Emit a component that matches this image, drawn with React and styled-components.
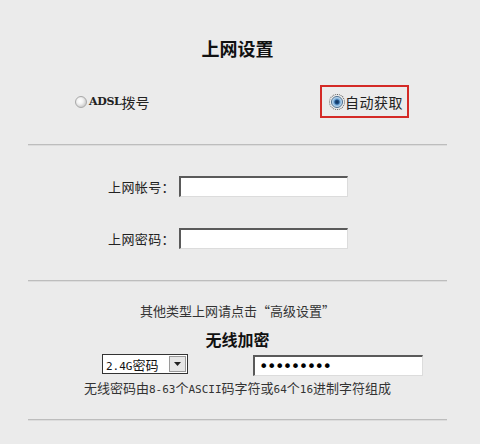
import React from "react";
import styled, { createGlobalStyle } from "styled-components";

const Global = createGlobalStyle`
  html, body { margin: 0; padding: 0; background: #ebebeb; }
  body { font-family: "Noto Sans CJK SC", "Noto Sans", sans-serif; color: #222; }
`;

const Page = styled.div`
  width: 480px;
  height: 444px;
  background: #ebebeb;
  overflow: hidden;
`;

const Panel = styled.div`
  margin-left: 28px;
  width: 419px;
  display: flex;
  flex-direction: column;
`;

const Title = styled.div`
  margin-top: ${(p) => p.$top}px;
  height: ${(p) => p.$h}px;
  line-height: ${(p) => p.$h}px;
  font-size: ${(p) => p.$size}px;
  font-weight: 700;
  text-align: center;
  color: #111;
`;

const RadioRow = styled.div`
  margin-top: 25px;
  height: 33px;
  display: flex;
  align-items: center;
  padding-left: 47px;
  padding-right: 38px;
`;

const Option = styled.label`
  display: flex;
  align-items: center;
  font-size: 14px;
  color: #222;
  ${(p) =>
    p.$boxed &&
    `
    margin-left: auto;
    box-sizing: border-box;
    width: 89px;
    height: 33px;
    border: 2px solid #d42a26;
    padding: 0 0 0 9px;
    letter-spacing: 0.5px;
  `}
`;

const Latin = styled.span`
  font-family: "DejaVu Serif", serif;
  font-weight: 700;
  font-size: 11px;
  letter-spacing: -0.3px;
`;

const RadioDot = styled.span`
  width: 12px;
  height: 12px;
  border-radius: 50%;
  box-sizing: border-box;
  margin-right: 2px;
  border: 1px solid ${(p) => (p.$on ? "#4a6e8e" : "#a9a9a9")};
  background: ${(p) =>
    p.$on
      ? "radial-gradient(circle at 50% 50%, #0f2f55 0, #1d4f86 2px, #6fa6d6 3px, #cfe4f5 5px)"
      : "radial-gradient(circle at 40% 40%, #ffffff 0, #f2f2f2 3px, #cfcfcf 6px)"};
  ${(p) =>
    p.$on &&
    `
    outline: 1px dotted #555;
    outline-offset: 1px;
  `}
`;

const Divider = styled.div`
  margin-top: ${(p) => p.$top}px;
  height: 1px;
  background: #bdbdbd;
  border-bottom: 1px solid #dcdcdc;
`;

const FieldRow = styled.div`
  margin-top: ${(p) => p.$top}px;
  display: flex;
  align-items: center;
  padding-left: 80px;
  height: 21px;
`;

const Label = styled.span`
  width: 71px;
  font-size: 13px;
  letter-spacing: 0.4px;
  color: #222;
  white-space: nowrap;
`;

const TextBox = styled.input`
  box-sizing: border-box;
  width: ${(p) => p.$w}px;
  height: ${(p) => p.$h}px;
  margin: 0;
  padding: 0 4px;
  background: #fff;
  border-style: solid;
  border-width: 2px 1px 1px 2px;
  border-color: #5a5a5a #dcdcdc #dcdcdc #5a5a5a;
  outline: none;
  font-family: "DejaVu Sans", sans-serif;
  font-size: ${(p) => p.$fs || 12}px;
  letter-spacing: ${(p) => p.$ls || 0}px;
  color: #000;
`;

const Hint = styled.div`
  margin-top: ${(p) => p.$top}px;
  height: ${(p) => p.$h}px;
  line-height: ${(p) => p.$h}px;
  font-size: 13px;
  text-align: center;
  color: #333;
  white-space: nowrap;
`;

const WifiRow = styled.div`
  margin-top: 4px;
  height: 22px;
  display: flex;
  align-items: flex-start;
  padding-left: 74px;
`;

const FakeSelect = styled.div`
  box-sizing: border-box;
  width: 86px;
  height: 20px;
  border: 1px solid #333;
  background: #fff;
  display: flex;
  align-items: center;
  padding-left: 3px;
  font-size: 13px;
  color: #111;
`;

const SelectText = styled.span`
  flex: 1;
  white-space: nowrap;
`;

const SelNum = styled.span`
  font-family: "DejaVu Sans Mono", monospace;
  font-size: 11px;
`;

const ArrowBtn = styled.span`
  box-sizing: border-box;
  width: 17px;
  height: 16px;
  margin-right: 1px;
  border: 1px solid #9a9a9a;
  background: #e6e6e6;
  display: flex;
  align-items: center;
  justify-content: center;
`;

const PwdWrap = styled.div`
  margin-left: 65px;
  margin-top: 1px;
  display: flex;
`;

const Mono = styled.span`
  font-family: "DejaVu Sans Mono", monospace;
  font-size: 11px;
`;

export default function App() {
  return (
    <Page>
      <Global />
      <Panel>
        <Title $top={36} $h={24} $size={18}>上网设置</Title>
        <RadioRow>
          <Option>
            <RadioDot />
            <Latin>ADSL</Latin>拨号
          </Option>
          <Option $boxed>
            <RadioDot $on />
            自动获取
          </Option>
        </RadioRow>
        <Divider $top={26} />
        <FieldRow $top={30}>
          <Label>上网帐号：</Label>
          <TextBox $w={169} $h={21} defaultValue="" />
        </FieldRow>
        <FieldRow $top={31}>
          <Label>上网密码：</Label>
          <TextBox $w={169} $h={21} defaultValue="" />
        </FieldRow>
        <Divider $top={31} />
        <Hint $top={20} $h={18}>其他类型上网请点击“高级设置”</Hint>
        <Title $top={8} $h={22} $size={16}>无线加密</Title>
        <WifiRow>
          <FakeSelect>
            <SelectText>
              <SelNum>2.4G</SelNum>密码
            </SelectText>
            <ArrowBtn>
              <svg width="7" height="4" viewBox="0 0 7 4">
                <path d="M0 0h7L3.5 4z" fill="#222" />
              </svg>
            </ArrowBtn>
          </FakeSelect>
          <PwdWrap>
            <TextBox type="password" $w={170} $h={21} $fs={16} $ls={-1.5} defaultValue="123456789" readOnly />
          </PwdWrap>
        </WifiRow>
        <Hint $top={4} $h={16}>
          无线密码由<Mono>8-63</Mono>个<Mono>ASCII</Mono>码字符或<Mono>64</Mono>个<Mono>16</Mono>进制字符组成
        </Hint>
        <Divider $top={23} />
      </Panel>
    </Page>
  );
}
